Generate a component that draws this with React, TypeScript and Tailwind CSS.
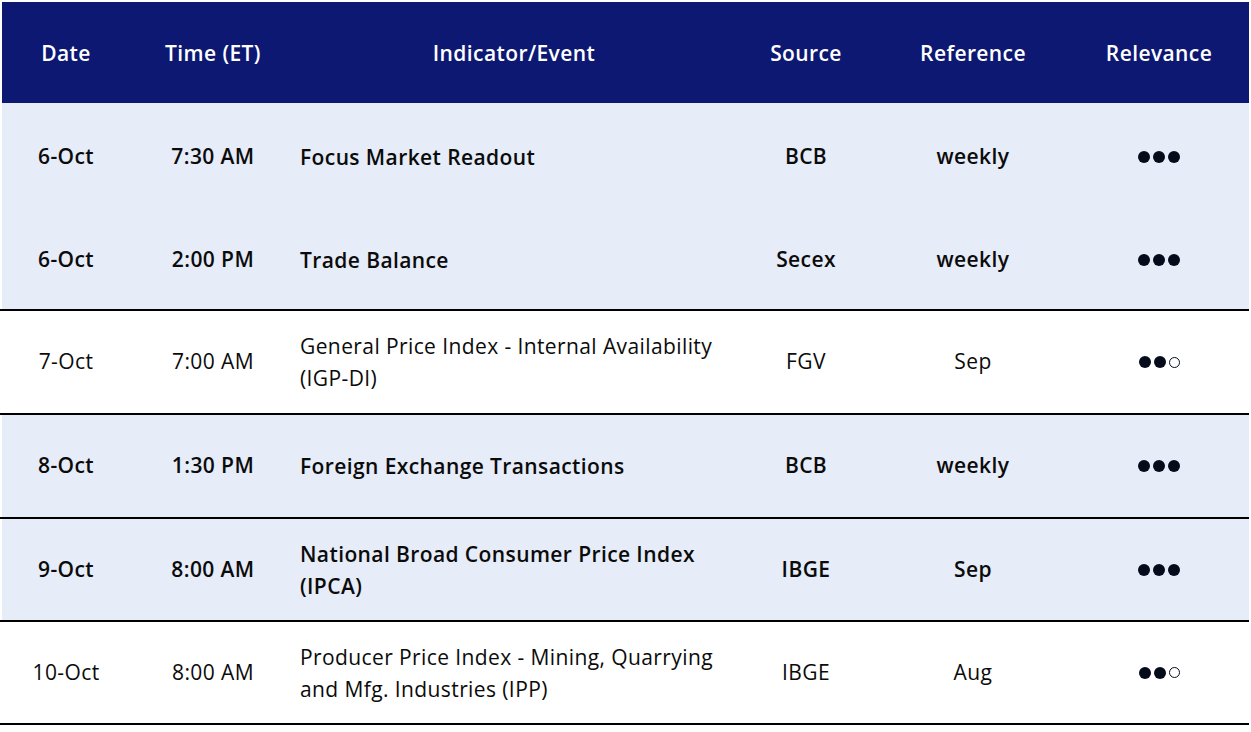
import React from "react";

type Row = {
  date: string;
  time: string;
  event: React.ReactNode;
  source: string;
  ref: string;
  rel: number;
  bold: boolean;
  blue: boolean;
  border: boolean;
  h: string;
};

const rows: Row[] = [
  { date: "6-Oct", time: "7:30 AM", event: "Focus Market Readout", source: "BCB", ref: "weekly", rel: 3, bold: true, blue: true, border: false, h: "h-[108px]" },
  { date: "6-Oct", time: "2:00 PM", event: "Trade Balance", source: "Secex", ref: "weekly", rel: 3, bold: true, blue: true, border: true, h: "h-[98px]" },
  { date: "7-Oct", time: "7:00 AM", event: (<>General Price Index - Internal Availability<br />(IGP-DI)</>), source: "FGV", ref: "Sep", rel: 2, bold: false, blue: false, border: true, h: "h-[102px]" },
  { date: "8-Oct", time: "1:30 PM", event: "Foreign Exchange Transactions", source: "BCB", ref: "weekly", rel: 3, bold: true, blue: true, border: true, h: "h-[102px]" },
  { date: "9-Oct", time: "8:00 AM", event: (<>National Broad Consumer Price Index<br />(IPCA)</>), source: "IBGE", ref: "Sep", rel: 3, bold: true, blue: true, border: true, h: "h-[101px]" },
  { date: "10-Oct", time: "8:00 AM", event: (<>Producer Price Index - Mining, Quarrying<br />and Mfg. Industries (IPP)</>), source: "IBGE", ref: "Aug", rel: 2, bold: false, blue: false, border: true, h: "h-[101px]" },
];

function Dots({ n }: { n: number }) {
  return (
    <div className="flex items-center gap-[3px]">
      {[0, 1, 2].map((i) =>
        i < n ? (
          <span key={i} className="block w-[12px] h-[12px] rounded-full bg-[#060b1c]" />
        ) : (
          <span key={i} className="block w-[11px] h-[11px] rounded-full border-[1.5px] border-[#060b1c]" />
        )
      )}
    </div>
  );
}

const grid = "grid grid-cols-[128px_166px_424px_172px_162px_196px]";

export default function App() {
  return (
    <div className="w-[1251px] h-[732px] bg-white text-[#0b0b0b] text-[21px] tracking-[0.4px] font-['Open_Sans',_'Noto_Sans',_sans-serif]">
      <div className="pt-[2px] px-[2px]">
        <div className={`${grid} h-[101px] pt-[3px] bg-[#0d1873] text-white font-semibold items-center`}>
          <div className="text-center">Date</div>
          <div className="text-center">Time (ET)</div>
          <div className="text-center pl-[12px]">Indicator/Event</div>
          <div className="text-center">Source</div>
          <div className="text-center">Reference</div>
          <div className="text-center pl-[14px]">Relevance</div>
        </div>
      </div>
      {rows.map((r, idx) => (
        <div key={idx} className={`${r.border ? "border-b-2 border-black" : ""} w-[1249px]`}>
          <div
            className={`${grid} ml-[2px] ${r.h} items-center ${r.blue ? "bg-[#e6ecf8]" : "bg-white"} ${r.bold ? "font-semibold" : "font-normal"}`}
          >
            <div className="text-center">{r.date}</div>
            <div className="text-center">{r.time}</div>
            <div className="pl-[4px] leading-[32px]">{r.event}</div>
            <div className="text-center">{r.source}</div>
            <div className="text-center">{r.ref}</div>
            <div className="flex justify-center pl-[14px]">
              <Dots n={r.rel} />
            </div>
          </div>
        </div>
      ))}
    </div>
  );
}
